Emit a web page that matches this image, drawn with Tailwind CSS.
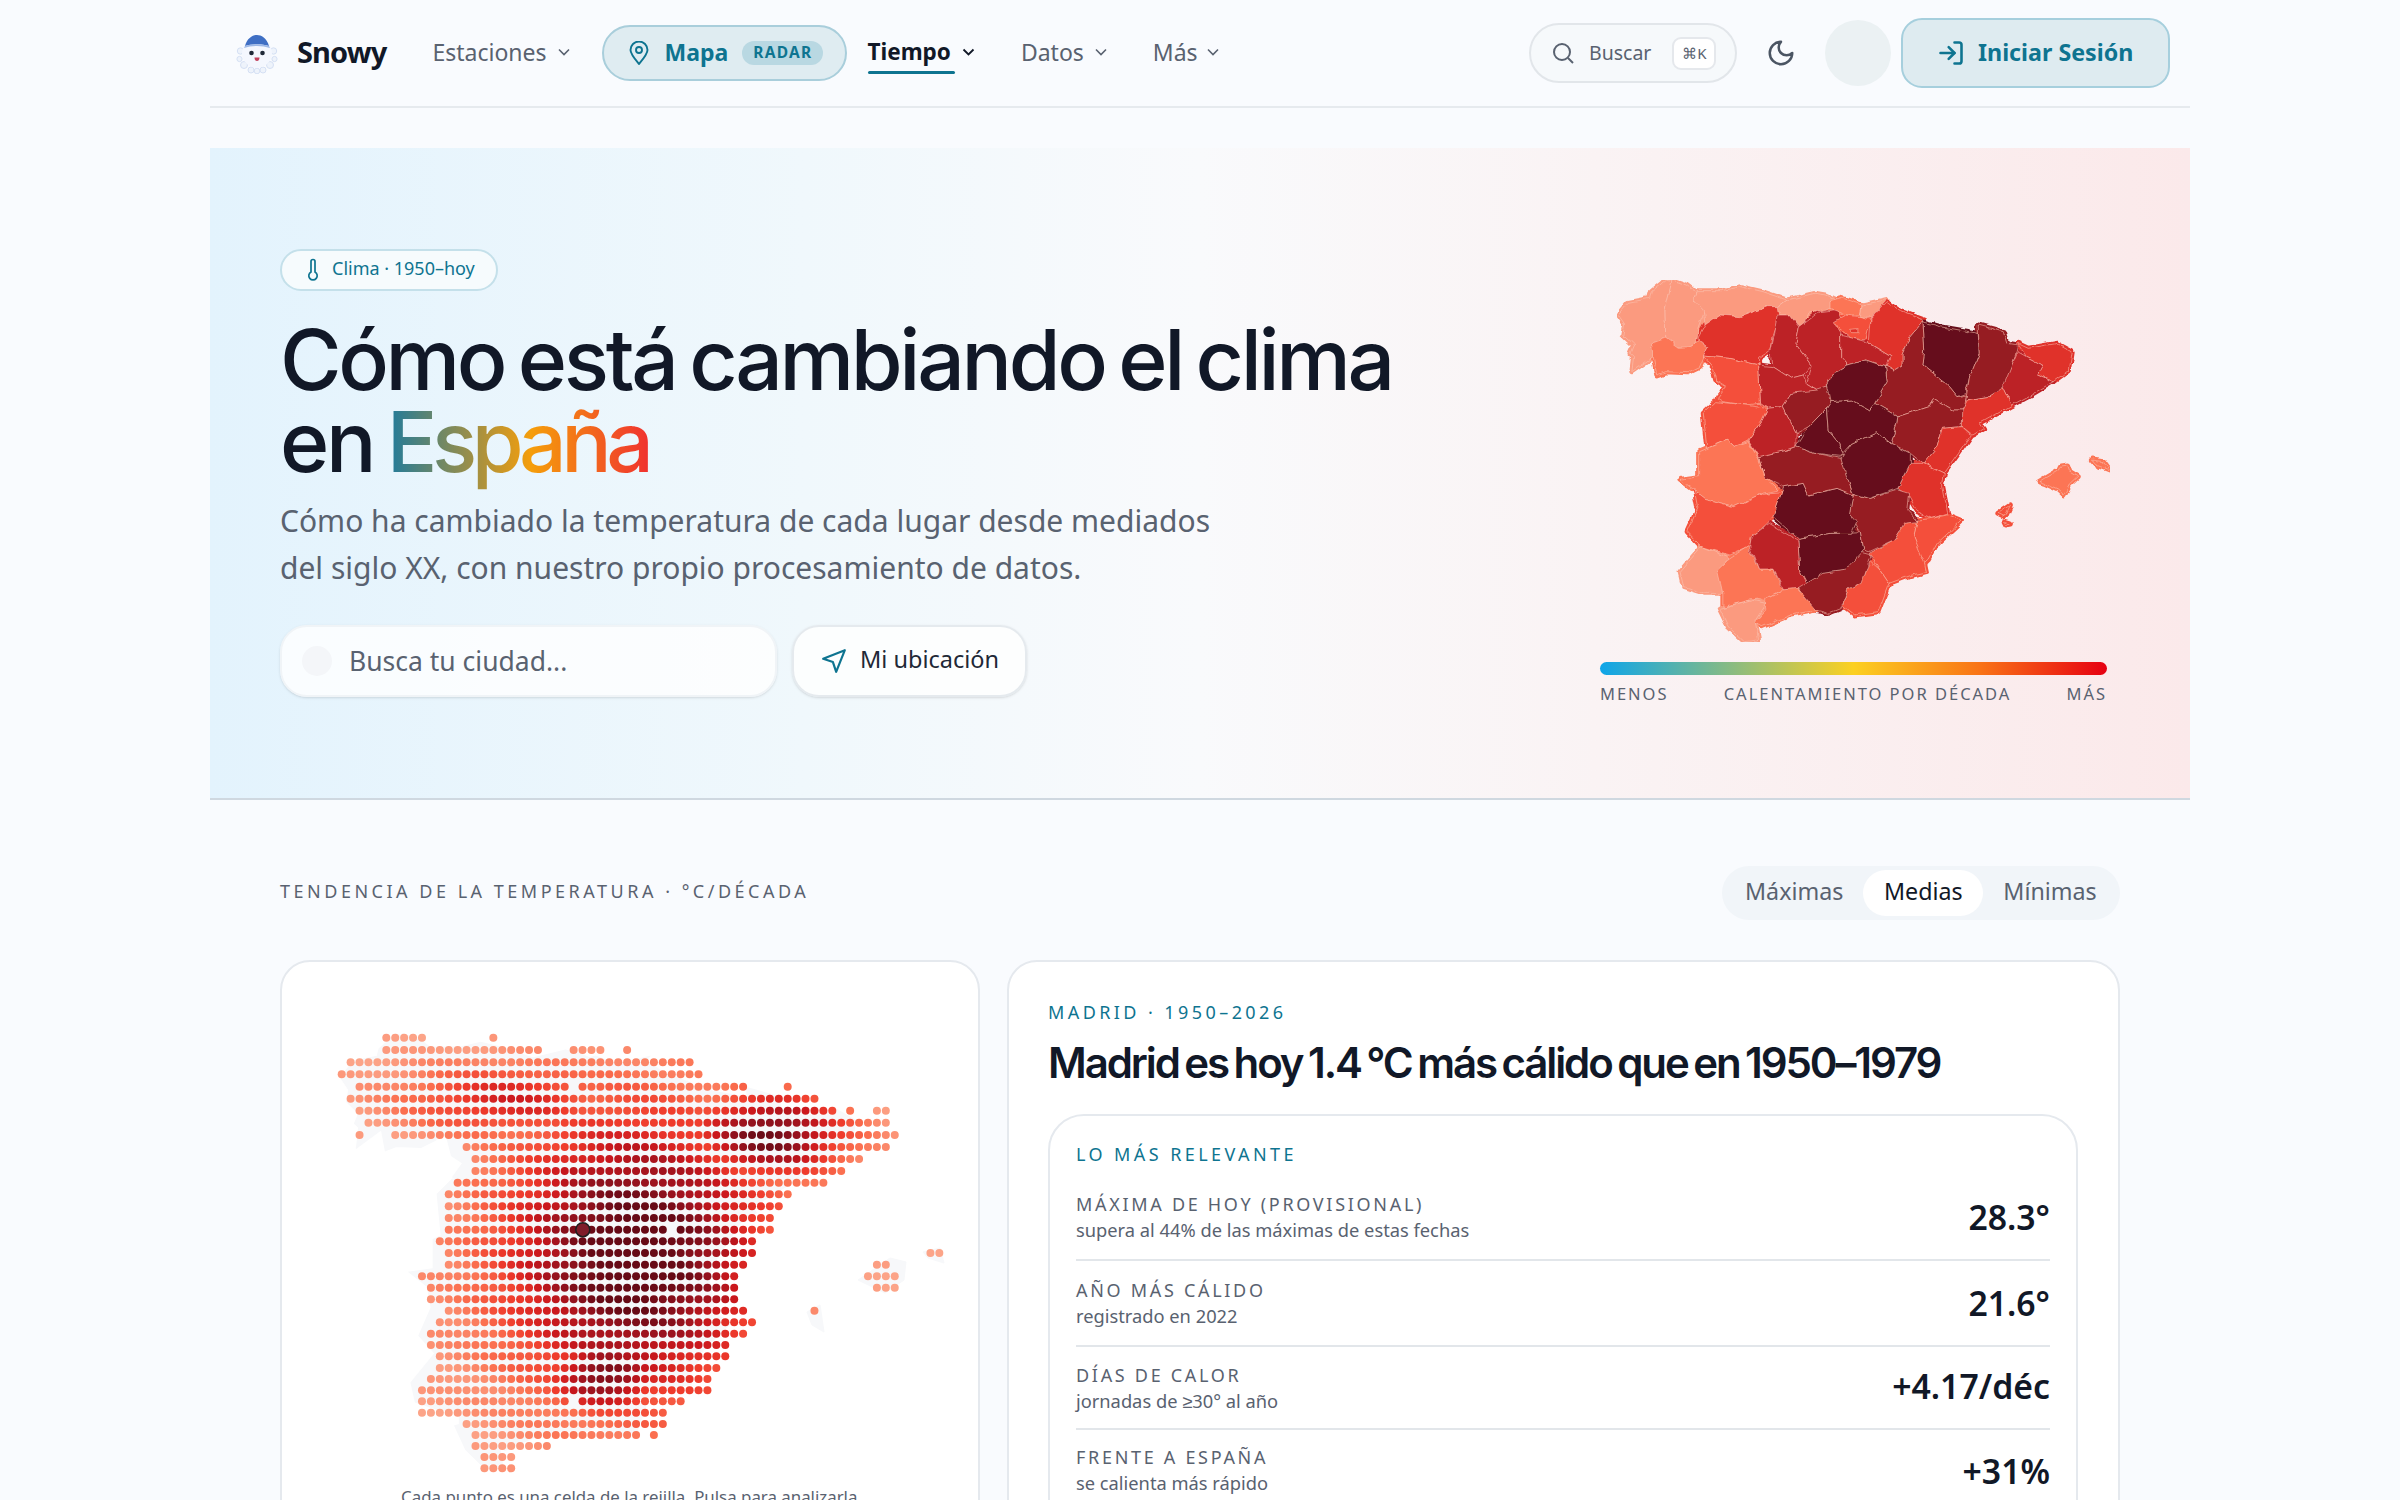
<!DOCTYPE html>
<html lang="es">
<head>
    <meta charset="UTF-8">
    <title>Snowy - Clima en España</title>
    <script src="https://cdn.jsdelivr.net/npm/@tailwindcss/browser@4"></script>
</head>
<body class="bg-[#f9fbfe] text-[#111827] font-['Noto_Sans',sans-serif] h-screen overflow-hidden">

<div class="w-[1980px] mx-auto">
    <!-- Nav -->
    <header class="h-[108px] border-b-[2px] border-[#e6eaee] flex items-center pl-[26px] pr-[20px]">
        <svg class="w-[42px] h-[42px] shrink-0" viewBox="0 0 42 42">
            <g fill="#eef3fb" stroke="#d5e0f4" stroke-width="1">
                <circle cx="4.500" cy="19" r="3.200"/><circle cx="37.500" cy="19" r="3.200"/><circle cx="3.500" cy="27" r="2.600"/><circle cx="38.500" cy="27" r="2.600"/><circle cx="8" cy="33" r="3.500"/><circle cx="34" cy="33" r="3.500"/><circle cx="21" cy="39" r="2.800"/><circle cx="15" cy="38" r="3"/><circle cx="27" cy="38" r="3"/>
            </g>
            <circle cx="21" cy="21" r="15" fill="#f4f7fe"/>
            <path d="M9 14C11 6 17 3 21 3s10 3 12 11c-7-2.500-17-2.500-24 0z" fill="#3f6fc4"/>
            <path d="M9 14c7-2.500 17-2.500 24 0l1 2c-8-2.800-18-2.800-26 0z" fill="#9db8e6"/>
            <circle cx="15.500" cy="21" r="2.300" fill="#1f2937"/><circle cx="26.500" cy="21" r="2.300" fill="#1f2937"/>
            <path d="M18.500 25.500h5c0 2.500-1.200 3.500-2.500 3.500s-2.500-1-2.500-3.500z" fill="#c2415c"/>
        </svg>
        <a class="ml-[19px] pb-[2px] text-[29px] font-bold tracking-[-0.03em] text-[#111827]">Snowy</a>
        <a class="ml-[46px] pb-[2px] text-[23px] text-[#596270] flex items-center gap-[11px]">Estaciones
            <svg class="w-[12px] h-[8px]" viewBox="0 0 12 8" fill="none" stroke="currentColor" stroke-width="1.600"><path d="M1 1.500l5 5 5-5"/></svg>
        </a>
        <a class="ml-[32px] w-[245px] h-[56px] rounded-full bg-[#dfecf1] border-[2px] border-[#a9cedb] flex items-center pl-[25px] text-[#0e7490]">
            <svg class="w-[20px] h-[24px]" viewBox="0 0 20 24" fill="none" stroke="currentColor" stroke-width="1.900"><path d="M10 23C5 17 1.500 13 1.500 9a8.500 8.500 0 0 1 17 0c0 4-3.500 8-8.500 14z"/><circle cx="10" cy="9" r="3"/></svg>
            <span class="ml-[16px] pb-[2px] text-[23px] font-bold">Mapa</span>
            <span class="ml-[14px] h-[24px] w-[81px] rounded-full bg-[#b9d8e2] text-[15.500px] font-bold tracking-[0.08em] flex items-center justify-center">RADAR</span>
        </a>
        <a class="ml-[21px] pb-[2px] relative text-[22.500px] font-bold text-[#111827] flex items-center gap-[11px]">Tiempo
            <svg class="w-[13px] h-[8px]" viewBox="0 0 12 8" fill="none" stroke="currentColor" stroke-width="1.800"><path d="M1 1.500l5 5 5-5"/></svg>
            <span class="absolute left-0 top-[36px] w-[87px] h-[3px] rounded-full bg-[#0e7490]"></span>
        </a>
        <a class="ml-[46px] pb-[2px] text-[23px] text-[#596270] flex items-center gap-[11px]">Datos
            <svg class="w-[12px] h-[8px]" viewBox="0 0 12 8" fill="none" stroke="currentColor" stroke-width="1.600"><path d="M1 1.500l5 5 5-5"/></svg>
        </a>
        <a class="ml-[46px] pb-[2px] text-[23px] text-[#596270] flex items-center gap-[9px]">Más
            <svg class="w-[12px] h-[8px]" viewBox="0 0 12 8" fill="none" stroke="currentColor" stroke-width="1.600"><path d="M1 1.500l5 5 5-5"/></svg>
        </a>
        <div class="ml-auto w-[208px] h-[60px] rounded-full bg-[#f6f9fb] border-[2px] border-[#e2e6ea] flex items-center pl-[21px] text-[#596270]">
            <svg class="w-[22px] h-[22px]" viewBox="0 0 22 22" fill="none" stroke="currentColor" stroke-width="2"><circle cx="10" cy="10" r="8"/><path d="M16 16l5 5"/></svg>
            <span class="ml-[15px] text-[19.500px]">Buscar</span>
            <span class="ml-[21px] w-[44px] h-[33px] rounded-[9px] bg-white border-[2px] border-[#e5e8ec] text-[15px] flex items-center justify-center">⌘K</span>
        </div>
        <svg class="ml-[29px] w-[30px] h-[30px] shrink-0" viewBox="0 0 24 24" fill="none" stroke="#4b5563" stroke-width="2" stroke-linecap="round" stroke-linejoin="round"><path d="M12 3a6 6 0 0 0 9 9 9 9 0 1 1-9-9z"/></svg>
        <div class="ml-[29px] w-[66px] h-[66px] rounded-full bg-[#ebf1f3]"></div>
        <a class="ml-[10px] w-[269px] h-[70px] rounded-[21px] bg-[#deebf0] border-[2px] border-[#a6cfdd] flex items-center pl-[34px] text-[#0e7490]">
            <svg class="w-[28px] h-[28px]" viewBox="0 0 24 24" fill="none" stroke="currentColor" stroke-width="2.200" stroke-linecap="round" stroke-linejoin="round"><path d="M15 3h4a2 2 0 0 1 2 2v14a2 2 0 0 1-2 2h-4"/><path d="M10 17l5-5-5-5"/><path d="M15 12H3"/></svg>
            <span class="ml-[13px] pb-[2px] text-[23.250px] font-bold">Iniciar Sesión</span>
        </a>
    </header>

    <!-- Hero -->
    <section class="mt-[40px] h-[652px] border-b-[2px] border-[#cfd8e0] flex justify-between pl-[70px] pr-[50px] bg-[linear-gradient(90deg,#e3f3fd_0%,#f0f8fc_30%,#f9fafc_50%,#faf3f4_70%,#fbe9ea_100%)]">
        <div class="pt-[101px]">
            <div class="w-[218px] h-[42px] rounded-full bg-[#f6fbfd] border-[2px] border-[#c4e0ea] flex items-center pl-[25px] text-[18px] text-[#0e7490]">
                <svg class="w-[12px] h-[24px]" viewBox="0 0 12 24" fill="none" stroke="currentColor" stroke-width="1.700"><path d="M4 3.500a2 2 0 0 1 4 0V14a4.200 4.200 0 1 1-4 0z"/></svg>
                <span class="ml-[13px] pb-[3px]">Clima · 1950–hoy</span>
            </div>
            <h1 class="mt-[28px] font-['Inter',sans-serif] font-medium text-[84px] leading-[82px] tracking-[-0.04em] [word-spacing:-0.065em] text-[#111827]">Cómo está cambiando el clima<br>en <span class="tracking-[-0.065em] bg-[linear-gradient(90deg,#1f7a9c_0%,#f59e0b_55%,#f0322f_100%)] bg-clip-text text-transparent">España</span></h1>
            <p class="mt-[14px] text-[30px] leading-[47px] text-[#596270]">Cómo ha cambiado la temperatura de cada lugar desde mediados<br>del siglo XX, con nuestro propio procesamiento de datos.</p>
            <div class="mt-[34px] flex gap-[15px]">
                <div class="w-[497px] h-[72px] rounded-[27px] bg-white/80 border-[2px] border-[#f0f4f7] shadow-sm flex items-center pl-[20px]">
                    <span class="w-[30px] h-[30px] rounded-full bg-[#f4f6f9]"></span>
                    <span class="ml-[17px] pt-[2px] text-[26.500px] text-[#596270]">Busca tu ciudad...</span>
                </div>
                <div class="w-[235px] h-[72px] rounded-[27px] bg-white/80 border-[2px] border-[#e5eaee] shadow-sm flex items-center pl-[27px]">
                    <svg class="w-[26px] h-[26px]" viewBox="0 0 24 24" fill="none" stroke="#0e7490" stroke-width="2" stroke-linejoin="round"><path d="M22 2L2 10l9 3 3 9z"/></svg>
                    <span class="ml-[13px] pb-[3px] text-[23.500px] text-[#1f2937]">Mi ubicación</span>
                </div>
            </div>
        </div>
        <div class="w-[560px] pt-[102px]">
            <svg id="hero-map" class="block w-[560px] h-[400px]" viewBox="0 0 1568 1200" preserveAspectRatio="none">
                <defs>
                    <filter id="jagged" x="0" y="0" width="100%" height="100%">
                        <feTurbulence type="fractalNoise" baseFrequency="0.035" numOctaves="2" seed="4" result="noise"/>
                        <feDisplacementMap in="SourceGraphic" in2="noise" scale="16" xChannelSelector="R" yChannelSelector="G"/>
                    </filter>
                </defs>
                <g id="hero-fill" filter="url(#jagged)"></g>
            </svg>
            <div class="mt-[12px] mx-[20px] w-[507px] h-[13px] rounded-full bg-[linear-gradient(90deg,#0ea5e9_0%,#fcd021_50%,#f97316_75%,#e60012_100%)]"></div>
            <div class="mt-[7px] mx-[20px] w-[507px] flex justify-between text-[16.500px] leading-[24px] tracking-[0.12em] text-[#596270]">
                <span>MENOS</span><span>CALENTAMIENTO POR DÉCADA</span><span>MÁS</span>
            </div>
        </div>
    </section>

    <!-- Trend -->
    <main class="px-[70px]">
        <div class="mt-[66px] flex items-center justify-between">
            <h2 class="pb-[3px] text-[18px] tracking-[0.195em] text-[#596270]">TENDENCIA DE LA TEMPERATURA · °C/DÉCADA</h2>
            <div class="w-[398px] h-[54px] rounded-full bg-[#f1f5f9] flex items-center pl-[23px] text-[23.250px] text-[#596270]">
                <span class="pb-[3px]">Máximas</span>
                <span class="ml-[20px] w-[120px] h-[46px] pb-[3px] rounded-full bg-white text-[#111827] flex items-center justify-center">Medias</span>
                <span class="ml-[20px] pb-[3px]">Mínimas</span>
            </div>
        </div>
        <div class="mt-[40px] flex gap-[27px]">
            <div class="w-[700px] h-[700px] shrink-0 rounded-[30px] bg-white border-[2px] border-[#e5e9ee] overflow-hidden">
                <svg id="dot-map" class="block ml-[18px] mt-[38px] w-[660px] h-[490px]" viewBox="0 0 660 490"></svg>
                <p class="-mt-[6px] pl-[3px] text-center text-[16.850px] text-[#596270]">Cada punto es una celda de la rejilla. Pulsa para analizarla.</p>
            </div>
            <div class="w-[1113px] h-[700px] rounded-[30px] bg-white border-[2px] border-[#e5e9ee] pl-[39px] pt-[36px]">
                <div class="text-[18px] leading-[28px] tracking-[0.19em] text-[#0e7490]">MADRID · 1950–2026</div>
                <h3 class="mt-[11px] font-['Inter',sans-serif] font-semibold text-[42px] leading-[52px] tracking-[-0.05em] [word-spacing:-0.07em] text-[#111827]">Madrid es hoy 1.4 °C más cálido que en 1950–1979</h3>
                <div class="mt-[25px] w-[1030px] h-[500px] rounded-[36px] border-[2px] border-[#e5e9ee] px-[26px] pt-[25px]">
                    <div class="text-[18px] leading-[26px] tracking-[0.19em] text-[#0e7490]">LO MÁS RELEVANTE</div>
                    <div class="mt-[24px] h-[70px] border-b-[2px] border-[#e2e6ea] flex justify-between items-start">
                        <div class="text-[#596270]">
                            <div class="text-[18px] leading-[26px] tracking-[0.15em]">MÁXIMA DE HOY (PROVISIONAL)</div>
                            <div class="text-[18.300px] leading-[26px]">supera al 44% de las máximas de estas fechas</div>
                        </div>
                        <div class="mt-[4px] text-[33.750px] leading-[44px] font-semibold">28.3°</div>
                    </div>
                    <div class="h-[86px] pt-[16px] border-b-[2px] border-[#e2e6ea] flex justify-between items-start">
                        <div class="text-[#596270]">
                            <div class="text-[18px] leading-[26px] tracking-[0.15em]">AÑO MÁS CÁLIDO</div>
                            <div class="text-[18.300px] leading-[26px]">registrado en 2022</div>
                        </div>
                        <div class="mt-[4px] text-[33.750px] leading-[44px] font-semibold">21.6°</div>
                    </div>
                    <div class="h-[83px] pt-[15px] border-b-[2px] border-[#e2e6ea] flex justify-between items-start">
                        <div class="text-[#596270]">
                            <div class="text-[18px] leading-[26px] tracking-[0.15em]">DÍAS DE CALOR</div>
                            <div class="text-[18.300px] leading-[26px]">jornadas de ≥30° al año</div>
                        </div>
                        <div class="mt-[2px] text-[33.750px] leading-[44px] font-semibold">+4.17/déc</div>
                    </div>
                    <div class="h-[70px] pt-[14px] flex justify-between items-start">
                        <div class="text-[#596270]">
                            <div class="text-[18px] leading-[26px] tracking-[0.15em]">FRENTE A ESPAÑA</div>
                            <div class="text-[18.300px] leading-[26px]">se calienta más rápido</div>
                        </div>
                        <div class="mt-[5px] text-[33.750px] leading-[44px] font-semibold">+31%</div>
                    </div>
                </div>
            </div>
        </div>
    </main>
</div>

<script>
    const SVG_NS = 'http://www.w3.org/2000/svg';

    // Province shapes, one shade per warming band
    const SHADES = ['#fb9a7f', '#fc7455', '#f4503a', '#e0302a', '#bc2027', '#961b22', '#66101a'];
    const PROVINCES = [
        [0, '105,195 135,157 195,145 200,125 240,90 258,95 238,180 240,265 200,280 205,320 145,365 150,320 140,310 150,285 120,255 125,225'],
        [0, '258,90 300,105 325,125 318,150 350,180 335,225 325,280 300,295 270,290 240,265 238,180'],
        [0, '325,122 400,122 450,110 510,125 580,150 555,170 525,170 450,200 390,195 350,225 345,180 318,150'],
        [0, '580,150 660,130 690,135 720,150 700,175 640,190 625,235 585,195 555,195 555,170'],
        [1, '200,280 240,265 275,292 310,290 335,272 358,290 345,325 335,350 300,368 240,365 215,375 205,320'],
        [3, '330,265 350,225 390,195 450,200 525,170 555,170 560,200 540,260 535,300 500,325 500,345 420,325 345,318 358,290'],
        [4, '555,195 590,195 615,230 605,280 650,345 625,375 590,385 540,350 535,300 545,250'],
        [4, '615,230 640,210 670,185 720,178 730,205 715,225 730,250 730,320 750,345 710,370 690,405 665,420 635,400 650,345 605,280'],
        [1, '700,155 735,145 790,165 785,195 745,195 700,175'],
        [0, '790,165 860,148 815,205 785,200'],
        [2, '712,215 745,195 785,200 815,210 800,270 760,265 725,235'],
        [3, '815,205 860,155 900,185 965,210 925,260 905,310 905,345 880,360 855,345 870,320 810,280'],
        [4, '730,255 800,275 870,320 855,350 800,330 750,345 730,320'],
        [6, '960,215 1010,230 1115,250 1118,310 1090,385 1080,430 1055,440 1025,400 960,345 965,300'],
        [5, '905,310 925,260 960,215 965,300 960,345 1025,400 1055,440 1082,435 1075,480 1045,480 990,445 975,470 890,500 825,460 860,395 855,345 880,360 905,345'],
        [5, '1115,225 1185,245 1195,280 1225,285 1215,330 1190,410 1140,440 1080,450 1090,385 1118,310'],
        [3, '1225,280 1255,295 1335,280 1378,305 1370,360 1325,395 1280,375 1295,345 1250,320'],
        [4, '1225,305 1250,320 1295,345 1280,375 1325,395 1270,430 1210,465 1185,410 1215,330'],
        [3, '1185,410 1210,465 1170,490 1120,520 1130,535 1100,555 1070,530 1070,480 1085,450 1140,440'],
        [5, '890,500 975,470 990,445 1045,480 1072,480 1070,530 1015,535 1000,590 960,640 925,610 870,580 885,530'],
        [3, '1015,535 1070,530 1095,555 1060,610 1020,670 960,640 1000,590'],
        [3, '925,640 960,640 1020,670 1015,710 1030,790 985,805 945,785 920,740 890,715'],
        [2, '985,805 1030,795 1068,812 1000,880 975,930 960,945 935,860 945,810'],
        [2, '810,910 880,870 910,815 945,810 935,860 965,940 970,965 930,975 865,1000 840,960'],
        [2, '815,935 840,960 865,1000 835,1085 770,1095 735,1065 750,1020 785,1000'],
        [5, '610,1005 635,1000 670,970 740,960 780,905 815,915 790,1000 750,1020 730,1075 695,1090 660,1080 620,1045'],
        [6, '610,865 700,850 785,845 795,900 745,960 680,970 635,1000 615,960'],
        [5, '765,730 810,745 890,720 920,730 915,780 945,815 910,820 880,870 810,905 795,900 785,845 755,790'],
        [6, '540,800 570,710 625,700 640,735 720,715 765,735 755,790 775,815 760,850 700,850 610,865'],
        [6, '730,630 760,580 830,545 870,580 925,610 925,640 890,715 810,745 765,730 745,680'],
        [5, '500,620 580,600 605,590 660,610 730,625 750,690 765,735 720,715 640,735 625,700 570,710 520,685'],
        [6, '605,590 640,530 690,475 695,540 725,580 735,620 660,610'],
        [6, '690,475 700,455 760,450 810,480 825,460 890,500 885,530 870,580 830,545 760,580 735,610 725,580 695,540'],
        [5, '565,470 590,430 660,415 690,405 710,445 690,475 640,530 605,550'],
        [6, '690,405 710,370 750,345 800,330 855,350 860,395 825,460 810,480 760,450 700,455'],
        [4, '500,345 540,350 590,385 625,375 635,400 665,420 590,430 565,470 525,475 505,460'],
        [4, '470,570 510,510 525,475 565,470 605,550 605,590 580,600 500,620'],
        [2, '345,318 420,325 500,345 505,460 465,465 400,455 385,445 410,410 380,390 370,350'],
        [2, '345,490 380,455 465,465 525,475 510,510 470,570 430,590 410,570 355,595'],
        [1, '335,605 410,570 430,590 470,575 500,625 520,685 555,720 510,730 430,770 350,745 320,720 280,688 335,680'],
        [2, '320,720 350,745 430,770 510,730 565,725 540,800 525,820 480,860 475,890 420,915 340,890 300,845 330,775'],
        [0, '340,890 420,925 400,960 400,1030 350,1030 290,1010 280,965'],
        [1, '385,960 420,925 470,890 500,960 540,960 565,1020 520,1045 480,1050 400,1070 400,1030'],
        [4, '480,860 530,820 610,870 615,960 635,1000 605,1020 570,1020 540,960 500,960 475,890'],
        [1, '490,1115 520,1080 520,1045 565,1020 610,1015 660,1080 590,1095 510,1130'],
        [0, '390,1075 480,1050 520,1060 490,1110 500,1170 460,1175 415,1130'],
        [1, '1285,695 1300,685 1340,660 1345,648 1365,645 1372,665 1395,680 1370,705 1355,735 1340,720 1300,700'],
        [1, '1432,630 1465,635 1482,660 1445,645'],
        [2, '1170,790 1205,765 1190,800'],
        [2, '1185,815 1205,822 1190,825'],
        [3, '755,238 778,236 778,248 760,248']
    ];
    const MAINLAND_COUNT = 46;

    const makePoly = (shade, points, stroke, width, opacity) => {
        const poly = document.createElementNS(SVG_NS, 'polygon');
        poly.setAttribute('points', points);
        poly.setAttribute('fill', SHADES[shade]);
        poly.setAttribute('stroke', stroke || SHADES[shade]);
        poly.setAttribute('stroke-opacity', opacity);
        poly.setAttribute('stroke-width', width);
        poly.setAttribute('stroke-linejoin', 'round');
        poly.setAttribute('vector-effect', 'non-scaling-stroke');
        return poly;
    };

    // first pass fattens each shape so the hand-traced joins leave no cracks
    const heroFill = document.getElementById('hero-fill');
    PROVINCES.forEach(([shade, points]) => heroFill.appendChild(makePoly(shade, points, null, 5, 1)));
    PROVINCES.forEach(([shade, points]) => heroFill.appendChild(makePoly(shade, points, '#fbc4b4', 1, 0.55)));

    // Dot grid: [row, first col, last col]
    const ROW_Y = [113,150,187,223,260,296,332,368,405,441,477,513,548,583,619,654,689,724,759,794,829,863,898,932,967,1001,1035,1069,1104,1137,1171,1204,1238,1272,1305,1338,1371,1405];
    const RUNS = [
        [0,5,9],[0,17,17],[1,5,22],[1,26,29],[1,32,32],[2,1,39],[3,0,40],[4,2,25],[4,27,45],[4,50,50],
        [5,1,53],[6,2,55],[6,57,57],[6,60,61],[7,3,61],[8,2,2],[8,6,62],[9,14,61],[10,15,58],[11,15,56],
        [12,13,54],[13,12,50],[14,12,49],[15,12,48],[16,12,36],[16,38,48],[17,11,46],[18,12,46],[18,66,67],
        [19,12,45],[19,60,61],[20,9,44],[20,59,62],[21,10,44],[21,60,62],[22,10,44],[23,12,45],[23,53,53],
        [24,11,46],[25,10,45],[26,10,43],[27,11,43],[28,11,42],[29,10,41],[30,9,41],[31,9,25],[31,27,38],
        [32,9,36],[33,14,36],[34,15,33],[34,35,35],[35,15,23],[36,16,19],[37,16,19]
    ];
    const RAMP = [[252,164,136],[251,112,80],[239,59,44],[203,24,29],[150,18,30],[103,10,22]];

    const blob = (x, y, cx, cy, sx, sy, amp) =>
        amp * Math.exp(-(((x - cx) / sx) ** 2 + ((y - cy) / sy) ** 2));

    const dotColor = (x, y, seed) => {
        let t = Math.max(
            blob(x, y, 335, 255, 140, 150, 1.1),
            blob(x, y, 470, 135, 80, 45, 0.98),
            blob(x, y, 305, 375, 60, 40, 0.95),
            blob(x, y, 210, 100, 110, 38, 0.6)
        );
        t += 0.05 * Math.sin(seed * 12.9898);
        t = Math.min(0.999, Math.max(0, t) ** 1.2) * (RAMP.length - 1);
        const i = Math.floor(t);
        const f = t - i;
        const mix = RAMP[i].map((v, k) => Math.round(v + (RAMP[i + 1][k] - v) * f));
        return `rgb(${mix.join(',')})`;
    };

    const dotMap = document.getElementById('dot-map');

    // faint land under the dots
    const land = document.createElementNS(SVG_NS, 'g');
    land.setAttribute('fill', '#f7f8fa');
    land.setAttribute('stroke', '#f7f8fa');
    const mainland = document.createElementNS(SVG_NS, 'g');
    mainland.setAttribute('transform', 'scale(0.402 0.397)');
    mainland.setAttribute('stroke-width', 10);
    PROVINCES.slice(0, MAINLAND_COUNT).forEach(([, points]) => {
        const poly = document.createElementNS(SVG_NS, 'polygon');
        poly.setAttribute('points', points);
        mainland.appendChild(poly);
    });
    land.appendChild(mainland);
    ['558,280 590,258 606,262 604,280 585,293', '623,252 640,248 644,263 628,258', '507,312 520,305 524,332 512,325'].forEach(points => {
        const poly = document.createElementNS(SVG_NS, 'polygon');
        poly.setAttribute('points', points);
        land.appendChild(poly);
    });
    dotMap.appendChild(land);

    RUNS.forEach(([row, from, to]) => {
        for (let col = from; col <= to; col++) {
            const x = 41.7 + 8.92 * col;
            const y = ROW_Y[row] / 3;
            const dot = document.createElementNS(SVG_NS, 'circle');
            dot.setAttribute('cx', x);
            dot.setAttribute('cy', y);
            dot.setAttribute('r', 4);
            dot.setAttribute('fill', dotColor(x, y, row * 71 + col));
            dotMap.appendChild(dot);
        }
    });
    const madrid = document.createElementNS(SVG_NS, 'circle');
    madrid.setAttribute('cx', 282.8);
    madrid.setAttribute('cy', 229.7);
    madrid.setAttribute('r', 7);
    madrid.setAttribute('fill', '#7f1d2a');
    madrid.setAttribute('stroke', '#1f1f1f');
    madrid.setAttribute('stroke-width', 1.5);
    dotMap.appendChild(madrid);
</script>
</body>
</html>
